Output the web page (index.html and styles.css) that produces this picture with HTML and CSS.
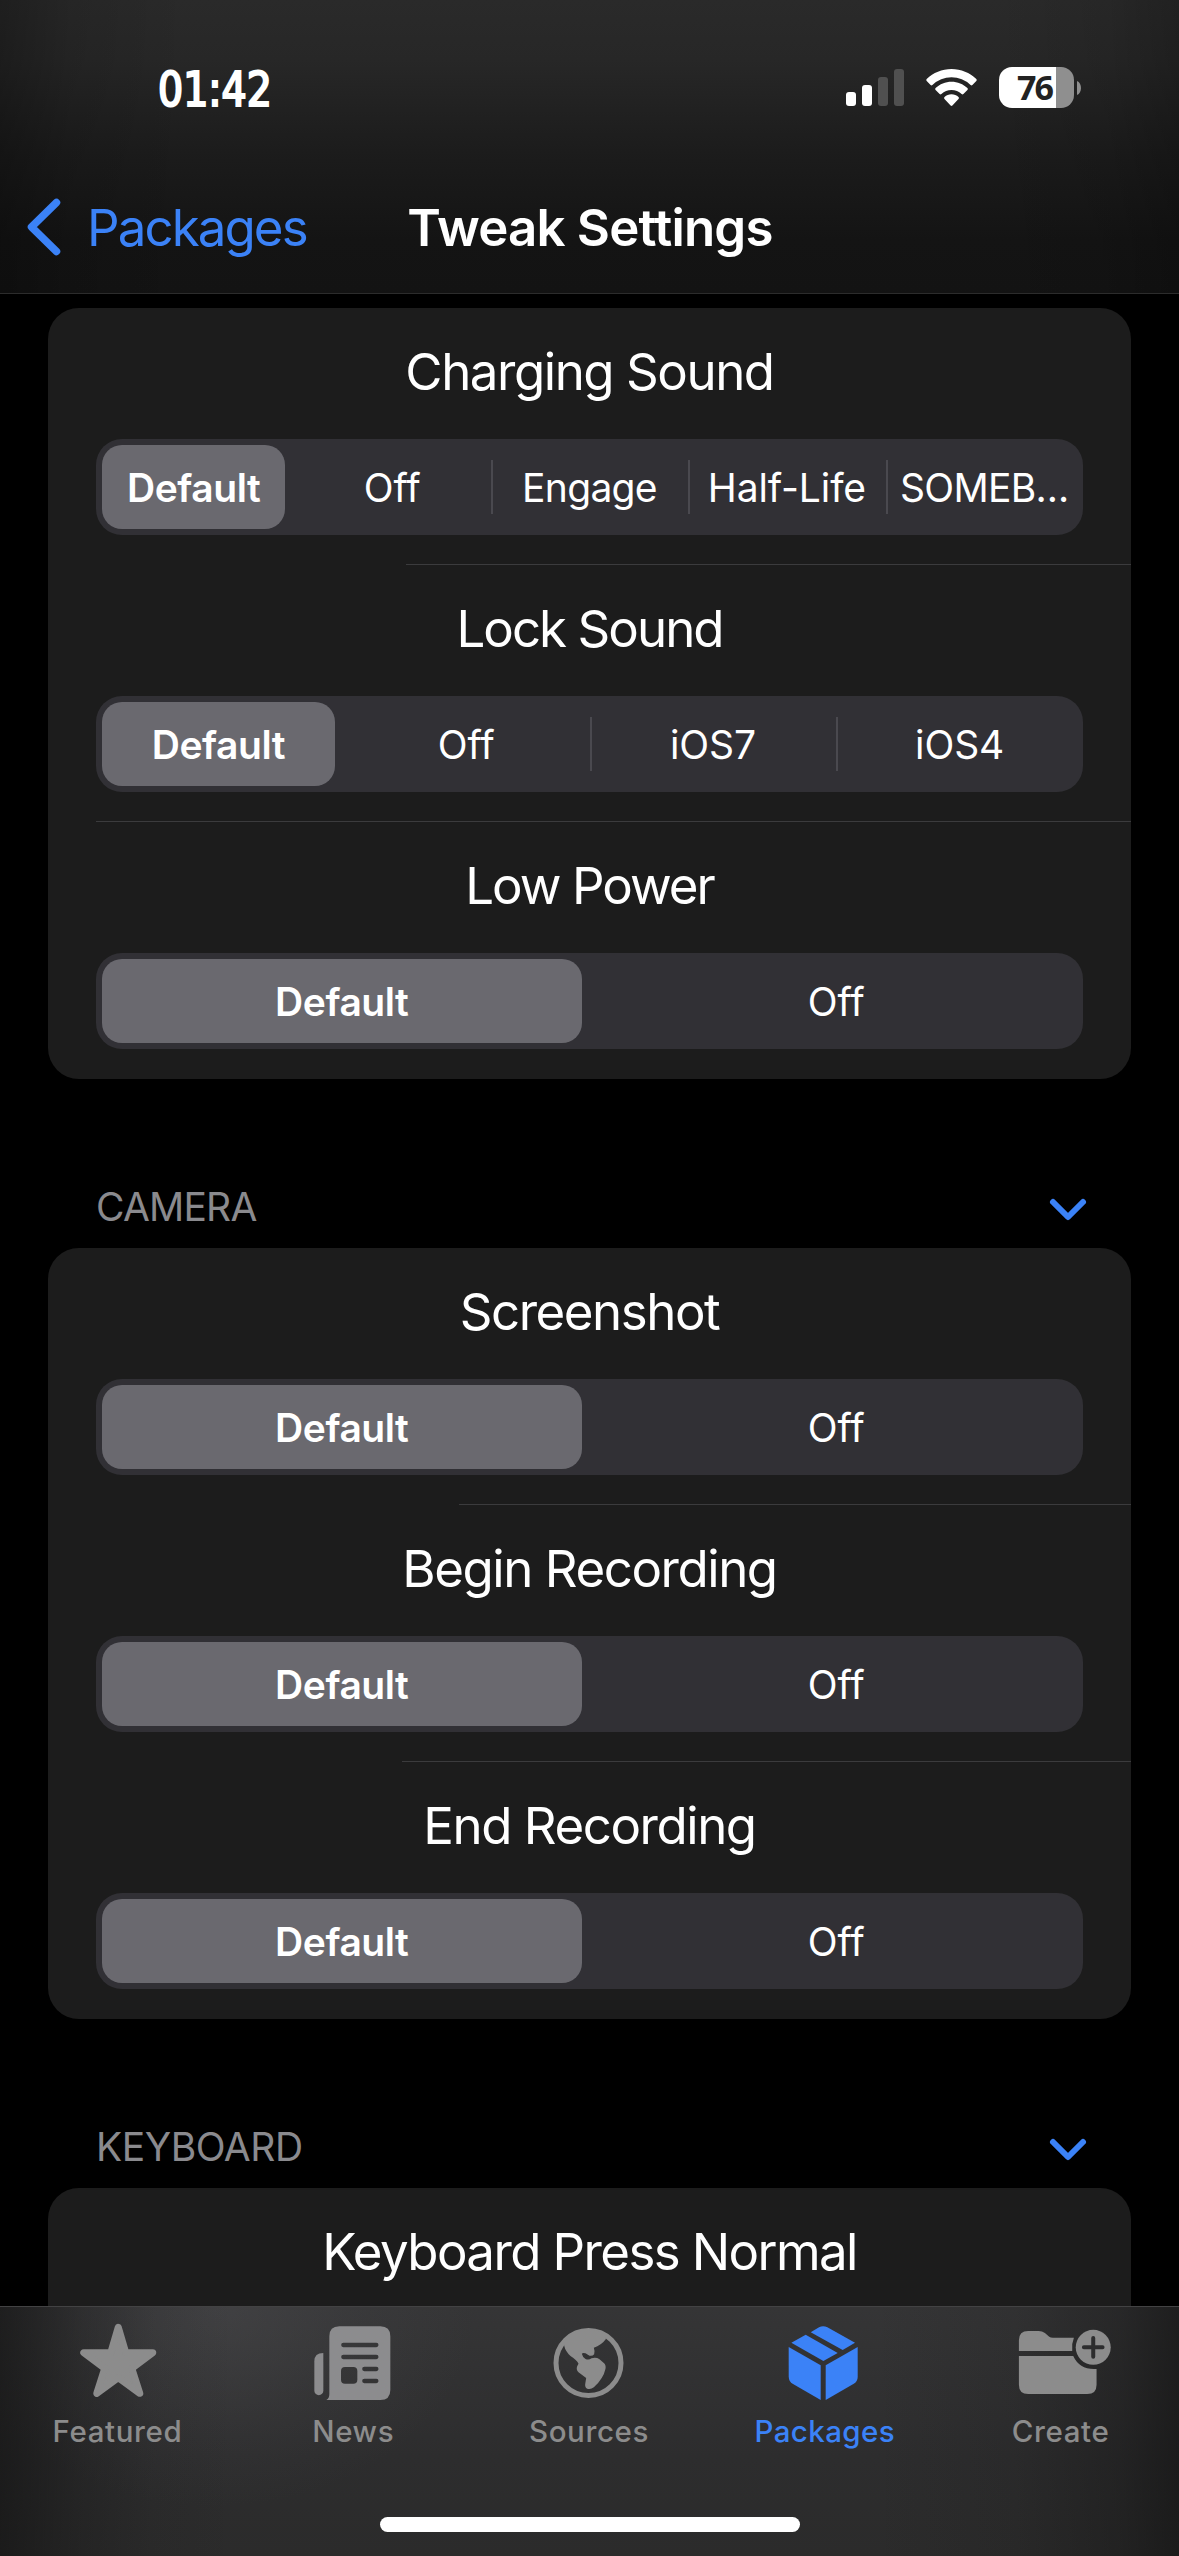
FILE: index.html
```
<!DOCTYPE html>
<html lang="en">
<head>
<meta charset="utf-8">
<title>Tweak Settings</title>
<link rel="stylesheet" href="styles.css">
</head>
<body>
<div class="screen">
  <header class="topbar">
    <div class="status">
      <span class="clock">01:42</span>
      <div class="indicators">
        <svg class="signal" width="58" height="38" viewBox="0 0 58 38">
          <rect x="0" y="23" width="10" height="14" rx="3" fill="#fff"/>
          <rect x="16" y="16" width="10" height="21" rx="3" fill="#fff"/>
          <rect x="32" y="8" width="10" height="29" rx="3" fill="#505050"/>
          <rect x="48" y="0" width="10" height="37" rx="3" fill="#505050"/>
        </svg>
        <svg class="wifi" width="51" height="38" viewBox="0 0 51 38" fill="#fff">
          <path d="M25.500 0C16 0 7.200 3.800.700 10Q-.300 11 .700 12L4.600 16Q5.500 16.800 6.400 16A27.500 27.500 0 0 1 44.600 16Q45.500 16.800 46.400 16L50.300 12Q51.300 11 50.300 10C43.800 3.800 35 0 25.500 0Z"/>
          <path d="M25.500 12.800C19.400 12.800 13.800 15.200 9.600 19.100Q8.600 20 9.600 21L13.600 25Q14.500 25.800 15.400 25A14.800 14.800 0 0 1 35.600 25Q36.500 25.800 37.400 25L41.400 21Q42.400 20 41.400 19.100C37.200 15.200 31.600 12.800 25.500 12.800Z"/>
          <path d="M25.500 25.300C22.800 25.300 20.400 26.300 18.500 28Q17.500 29 18.500 30L24.600 36.500Q25.500 37.300 26.400 36.500L32.500 30Q33.500 29 32.500 28C30.600 26.300 28.200 25.300 25.500 25.300Z"/>
        </svg>
        <div class="battery"><span class="battery-level">76</span></div>
        <svg class="battery-cap" width="4" height="14" viewBox="0 0 4 14"><path d="M0 0C5.300 2 5.300 12 0 14Z" fill="#8f8f8f"/></svg>
      </div>
    </div>
    <nav class="navbar">
      <a class="back">
        <svg width="34" height="58" viewBox="0 0 34 58"><path d="M29.500 4.500 4.500 29 29.500 53.500" fill="none" stroke="#3b82f7" stroke-width="7.500" stroke-linecap="round" stroke-linejoin="round"/></svg>
        <span>Packages</span>
      </a>
      <h1 class="nav-title">Tweak Settings</h1>
      <span></span>
    </nav>
  </header>

  <main class="content">
    <section class="card">
      <div class="row">
        <h2 class="row-title">Charging Sound</h2>
        <div class="segments"><span class="seg on">Default</span><span class="seg">Off</span><span class="seg div tight">Engage</span><span class="seg div">Half-Life</span><span class="seg div tight">SOMEB…</span></div>
        <i class="rule rule-charging"></i>
      </div>
      <div class="row">
        <h2 class="row-title t-short">Lock Sound</h2>
        <div class="segments"><span class="seg on">Default</span><span class="seg">Off</span><span class="seg div">iOS7</span><span class="seg div">iOS4</span></div>
        <i class="rule"></i>
      </div>
      <div class="row">
        <h2 class="row-title t-short">Low Power</h2>
        <div class="segments"><span class="seg on">Default</span><span class="seg">Off</span></div>
      </div>
    </section>

    <div class="section-head">
      <span class="h-camera">CAMERA</span>
      <svg class="chevron" width="36" height="22" viewBox="0 0 36 22"><path d="M3 3 18 18 33 3" fill="none" stroke="#3b82f7" stroke-width="6" stroke-linecap="round" stroke-linejoin="round"/></svg>
    </div>
    <section class="card">
      <div class="row">
        <h2 class="row-title">Screenshot</h2>
        <div class="segments"><span class="seg on">Default</span><span class="seg">Off</span></div>
        <i class="rule rule-screenshot"></i>
      </div>
      <div class="row">
        <h2 class="row-title">Begin Recording</h2>
        <div class="segments"><span class="seg on">Default</span><span class="seg">Off</span></div>
        <i class="rule rule-begin"></i>
      </div>
      <div class="row">
        <h2 class="row-title">End Recording</h2>
        <div class="segments"><span class="seg on">Default</span><span class="seg">Off</span></div>
      </div>
    </section>

    <div class="section-head">
      <span class="h-keyboard">KEYBOARD</span>
      <svg class="chevron" width="36" height="22" viewBox="0 0 36 22"><path d="M3 3 18 18 33 3" fill="none" stroke="#3b82f7" stroke-width="6" stroke-linecap="round" stroke-linejoin="round"/></svg>
    </div>
    <section class="card card-cut">
      <h2 class="row-title t-keyboard">Keyboard Press Normal</h2>
    </section>
  </main>

  <footer class="tabbar">
    <div class="tabs">
      <a class="tab">
        <svg class="tab-icon" viewBox="203.700 51 300 300"><path d="M354.500 112 377 188H458L395 235 419 310 354.500 263 290 310 314 235 251 188H332Z" fill="#8c8c8c" stroke="#8c8c8c" stroke-width="21" stroke-linejoin="round"/></svg>
        <span>Featured</span>
      </a>
      <a class="tab">
        <svg class="tab-icon" viewBox="911 51 300 300" fill="#8c8c8e">
          <path d="M969 189V302A13.500 13.500 0 0 1 942 302V214Q942 189 969 189Z"/>
          <path fill-rule="evenodd" d="M1017 109H1140Q1170 109 1170 139V300Q1170 330 1140 330H978Q987 326 987 312V139Q987 109 1017 109ZM1029 158.500A6.500 6.500 0 0 0 1029 171.500H1128A6.500 6.500 0 0 0 1128 158.500ZM1029 194.500A6.500 6.500 0 0 0 1029 207.500H1128A6.500 6.500 0 0 0 1128 194.500ZM1034 231Q1022 231 1022 243V269Q1022 281 1034 281H1059Q1071 281 1071 269V243Q1071 231 1059 231ZM1092 230.500A6.500 6.500 0 0 0 1092 243.500H1128A6.500 6.500 0 0 0 1128 230.500ZM1092 266.500A6.500 6.500 0 0 0 1092 279.500H1128A6.500 6.500 0 0 0 1128 266.500Z"/>
        </svg>
        <span>News</span>
      </a>
      <a class="tab">
        <svg class="tab-icon" viewBox="418.500 51 300 300">
          <circle cx="567" cy="219" r="97.500" fill="none" stroke="#8c8c8c" stroke-width="15"/>
          <path fill="#8c8c8c" d="M494 160 510 135 535 121 570 116 605 125 620 146Q605 166 583 173Q587 184 584 193Q579 199 570 197L558 190Q550 187 547 191Q549 201 558 207Q568 211 576 205Q590 201 600 208L613 219Q620 225 618 236Q612 265 583 292Q573 300 563 296Q556 293 557 283L560 264 537 247Q529 240 533 229L537 221Q532 210 513 198Q498 184 494 167Z"/>
        </svg>
        <span>Sources</span>
      </a>
      <a class="tab active">
        <svg class="tab-icon" viewBox="-74.100 51 300 300" fill="#3b82f7">
          <path d="M33 127 58 112Q70 105 83 112L166 158 129 180Z"/>
          <path d="M-25 158 18 134 114 189 71 213Z"/>
          <path d="M-33 171 63 226V330L-20 282Q-33 274 -33 260Z"/>
          <path d="M78 226 174 171V260Q174 274 161 282L78 330Z"/>
        </svg>
        <span>Packages</span>
      </a>
      <a class="tab">
        <svg class="tab-icon" viewBox="633.300 51 300 300" fill="#8c8c8c">
          <path d="M657 183V151Q657 123 685 123H716Q727 123 735 129L748 140Q752 143 759 143H822Q814 163 817 183Z"/>
          <path d="M657 198H820Q838 237 882 237H890V284Q890 312 862 312H685Q657 312 657 284Z"/>
          <circle cx="880" cy="172" r="52.500"/>
          <path d="M880 144V200M852 172H908" stroke="#2d2d2e" stroke-width="12" stroke-linecap="round"/>
        </svg>
        <span>Create</span>
      </a>
    </div>
    <div class="home-indicator"></div>
  </footer>
</div>
</body>
</html>
```
FILE: styles.css
```
* { box-sizing: border-box; }
body { margin: 0; background: #000; }
.screen {
  width: 1179px;
  height: 2556px;
  overflow: hidden;
  display: flex;
  flex-direction: column;
  background: #000;
  color: #fff;
  font-family: Inter, "Liberation Sans", sans-serif;
}
h1, h2 { margin: 0; font-weight: 400; }
svg { display: block; flex: none; overflow: visible; }

.topbar {
  flex: none;
  height: 294px;
  border-bottom: 1px solid #2c2c2c;
  background:
    linear-gradient(90deg, rgba(0,0,0,.28), rgba(0,0,0,.1) 6%, rgba(0,0,0,0) 16%, rgba(0,0,0,0) 84%, rgba(0,0,0,.08) 94%, rgba(0,0,0,.22)),
    linear-gradient(180deg, #2a2a2a 0, #272727 60px, #1b1b1b 160px, #141414 240px, #131313 100%);
}
.status {
  height: 176px;
  display: flex;
  justify-content: space-between;
  padding: 0 98px 0 158px;
}
.clock {
  margin-top: 60px;
  height: 58px;
  line-height: 58px;
  font-family: "DejaVu Sans Condensed", "DejaVu Sans", sans-serif;
  font-stretch: condensed;
  font-weight: 400;
  font-size: 48px;
  -webkit-text-stroke: 2.200px #fff;
  transform: scaleX(.915);
  transform-origin: 0 50%;
}
.indicators { display: flex; height: 41px; margin-top: 67px; }
.signal { margin: 2px 22px 0 0; }
.wifi { margin: 2px 22px 0 0; }
.battery {
  width: 75px;
  height: 41px;
  border-radius: 13px;
  background: linear-gradient(90deg, #fff 57px, #8f8f8f 57px);
  color: #222;
  display: flex;
  padding-left: 18px;
}
.battery-level {
  font-family: "Open Sans", sans-serif;
  font-size: 34px;
  line-height: 41px;
  font-weight: 700;
  letter-spacing: -2px;
}
.battery-cap { margin: 14px 0 0 3px; }
.navbar {
  height: 102px;
  display: grid;
  grid-template-columns: 1fr auto 1fr;
  align-items: center;
  padding: 0 27px;
}
.back { display: flex; align-items: center; gap: 26px; color: #3b82f7; font-size: 51px; letter-spacing: -1.900px; }
.nav-title { margin-left: 1px; font-weight: 600; font-size: 51px; letter-spacing: -.800px; }

.content { flex: none; height: 2012px; padding: 14px 48px 0; overflow: hidden; }
.card { background: #1c1c1c; border-radius: 31px; }
.card-cut { height: 130px; border-radius: 31px 31px 0 0; }
.row { height: 257px; display: flex; flex-direction: column; padding-left: 48px; }
.row-title {
  height: 131px;
  flex: none;
  line-height: 127px;
  font-size: 51px;
  letter-spacing: -1.450px;
  text-align: center;
}
.row .row-title { margin-right: 48px; }
.row .t-short { letter-spacing: -1.950px; }
.t-keyboard { letter-spacing: -1.600px; }
.segments {
  width: 987px;
  height: 96px;
  flex: none;
  display: grid;
  grid-auto-flow: column;
  grid-auto-columns: minmax(0, 1fr);
  border-radius: 26px;
  background: #313035;
}
.seg {
  display: flex;
  align-items: center;
  justify-content: center;
  font-size: 39px;
  font-weight: 400;
  letter-spacing: -.100px;
  white-space: nowrap;
}
.seg.on { margin: 6px 8px 6px 6px; border-radius: 20px; background: #6a696f; font-weight: 600; letter-spacing: -.450px; }
.seg.div { background: linear-gradient(#4a494f, #4a494f) -2px 21px / 4px 54px no-repeat; }
.seg.tight { letter-spacing: -.700px; }
.rule { display: block; flex: none; height: 1px; margin-top: 29px; background: #3b3b3d; }
.rule-charging { margin-left: 310px; }
.rule-screenshot { margin-left: 363px; }
.rule-begin { margin-left: 306px; }

.section-head {
  height: 169px;
  display: flex;
  justify-content: space-between;
  padding: 104px 45px 0 48px;
  color: #8a8a8e;
  font-size: 39px;
  line-height: 48px;
}
.h-camera { letter-spacing: -.800px; }
.h-keyboard { letter-spacing: -.450px; }
.chevron { margin-top: 16px; }

.tabbar {
  flex: none;
  height: 250px;
  border-top: 1px solid #424243;
  background:
    linear-gradient(90deg, rgba(20,20,20,.7), rgba(20,20,20,.3) 7%, rgba(20,20,20,.08) 13%, rgba(20,20,20,0) 20%, rgba(20,20,20,0) 74%, rgba(20,20,20,.12) 86%, rgba(20,20,20,.4) 95%, rgba(20,20,20,.7)),
    radial-gradient(ellipse 260px 200px at 215px 0, rgba(90,90,94,.32), rgba(90,90,94,.1) 60%, rgba(90,90,94,0)),
    linear-gradient(180deg, #353536, #2d2d2e 60%, #2b2b2b);
}
.tabs { display: grid; grid-template-columns: repeat(5, 1fr); height: 210px; }
.tab {
  display: flex;
  flex-direction: column;
  align-items: center;
  color: #8c8c8c;
  font-size: 29.500px;
  font-weight: 500;
  line-height: 36px;
  letter-spacing: .600px;
}
.tab span { margin: 6px 1px 0 0; }
.tab-icon { width: 100px; height: 100px; }
.tab.active { color: #3b82f7; letter-spacing: .400px; }
.home-indicator { width: 420px; height: 15px; margin: 0 auto; border-radius: 8px; background: #fff; }
```
